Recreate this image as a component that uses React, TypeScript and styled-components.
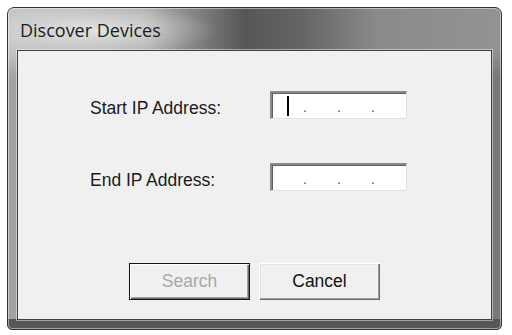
import React from 'react';
import styled, { createGlobalStyle } from 'styled-components';

const GlobalStyle = createGlobalStyle`
  html, body {
    margin: 0;
    padding: 0;
    background: #ffffff;
  }
  body {
    font-family: "Liberation Sans", Arial, sans-serif;
  }
`;

const Page = styled.div`
  width: 512px;
  height: 335px;
  padding: 7px 0 0 7px;
  box-sizing: border-box;
`;

// Aero-style frame: light glow behind the caption, dark band in the middle
const Window = styled.div`
  width: 495px;
  height: 323px;
  box-sizing: border-box;
  border: 1px solid #333333;
  border-radius: 7px 7px 5px 5px;
  display: flex;
  flex-direction: column;
  box-shadow: inset 0 0 0 1px rgba(255, 255, 255, 0.45);
  background:
    radial-gradient(ellipse 120px 26px at 90px 22px, rgba(255, 255, 255, 0.6), rgba(255, 255, 255, 0)),
    linear-gradient(to bottom, rgba(0, 0, 0, 0) calc(100% - 10px), #575757 calc(100% - 10px)),
    linear-gradient(to bottom, rgba(0, 0, 0, 0) 42px, rgba(0, 0, 0, 0.18) 70px),
    linear-gradient(to right, #c6c6c6 0%, #b0b0b0 28%, #565656 48%, #666666 60%, #8a8a8a 75%, #939393 100%);
`;

const TitleBar = styled.div`
  height: 42px;
  flex: none;
  display: flex;
  align-items: center;
  padding: 2px 0 0 12px;
  box-sizing: border-box;
  font-family: "Open Sans", "Noto Sans", sans-serif;
  font-size: 18px;
  color: #1c1c1c;
`;

const Client = styled.div`
  flex: 1;
  margin: 0 9px 9px;
  background: #f0f0f0;
  border: 1px solid #404040;
  box-shadow: 0 0 0 1px rgba(255, 255, 255, 0.45);
  display: flex;
  flex-direction: column;
`;

const Fields = styled.div`
  margin-top: 40px;
  padding-left: 72px;
  display: grid;
  grid-template-columns: 180px 137px;
  row-gap: 44px;
  align-items: center;
`;

const Label = styled.div`
  font-size: 17.5px;
  color: #1a1a1a;
  padding-top: 6px;
`;

const IpInput = styled.div`
  height: 28px;
  box-sizing: border-box;
  background: #ffffff;
  border-top: 2px solid #8a8a8a;
  border-left: 2px solid #8a8a8a;
  border-right: 1px solid #e2e2e2;
  border-bottom: 1px solid #e2e2e2;
  box-shadow: inset 1px 1px 0 #5e5e5e;
  display: flex;
`;

const Octet = styled.div`
  flex: 1;
  display: flex;
  align-items: center;
  justify-content: center;
`;

const Dot = styled.div`
  width: 2px;
  display: flex;
  justify-content: center;
  font-size: 14px;
  color: #555555;
  padding-top: 6px;
`;

const Caret = styled.div`
  width: 2px;
  height: 20px;
  background: #000000;
`;

const Buttons = styled.div`
  margin-top: 72px;
  display: flex;
  justify-content: center;
  gap: 9px;
`;

const Button = styled.div<{ $default?: boolean; $disabled?: boolean }>`
  width: 121px;
  height: 37px;
  box-sizing: border-box;
  display: flex;
  align-items: center;
  justify-content: center;
  font-size: 17.5px;
  background: #f0f0f0;
  color: ${(p) => (p.$disabled ? '#a8a8a8' : '#111111')};
  ${(p) =>
    p.$default
      ? `
    border: 1px solid #141414;
    box-shadow: inset 1px 1px 0 #ffffff, inset -1px -1px 0 #6a6a6a, inset -2px -2px 0 #a0a0a0;
  `
      : `
    box-shadow: inset 1px 1px 0 #ffffff, inset -1px -1px 0 #696969, inset -2px -2px 0 #a0a0a0, inset 2px 2px 0 #e3e3e3;
  `}
`;

function IpField({ focused }: { focused?: boolean }) {
  return (
    <IpInput>
      <Octet>{focused && <Caret />}</Octet>
      <Dot>.</Dot>
      <Octet />
      <Dot>.</Dot>
      <Octet />
      <Dot>.</Dot>
      <Octet />
    </IpInput>
  );
}

export default function App() {
  return (
    <>
      <GlobalStyle />
      <Page>
        <Window>
          <TitleBar>Discover Devices</TitleBar>
          <Client>
            <Fields>
              <Label>Start IP Address:</Label>
              <IpField focused />
              <Label>End IP Address:</Label>
              <IpField />
            </Fields>
            <Buttons>
              <Button $default $disabled>Search</Button>
              <Button>Cancel</Button>
            </Buttons>
          </Client>
        </Window>
      </Page>
    </>
  );
}
